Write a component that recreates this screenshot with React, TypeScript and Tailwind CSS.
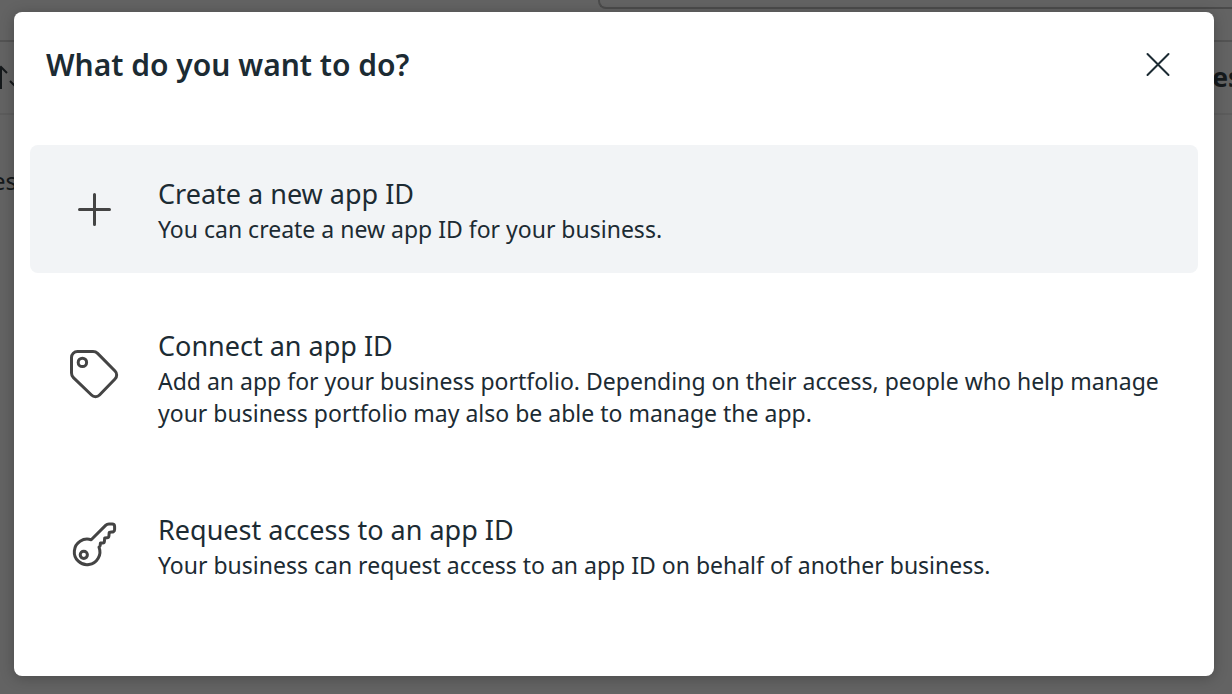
import type { ReactNode } from "react";

const iconProps = {
  fill: "none",
  stroke: "currentColor",
  strokeWidth: 3,
  strokeLinecap: "round" as const,
  strokeLinejoin: "round" as const,
  "aria-hidden": true,
};

function PlusIcon() {
  return (
    <svg width="64" height="64" viewBox="0 0 64 64" {...iconProps}>
      <path d="M32.5 17.5v30M17.5 32.5h30" />
    </svg>
  );
}

function TagIcon() {
  return (
    <svg width="64" height="64" viewBox="0 3 64 64" {...iconProps}>
      <path d="M15.5 9.5H31a6.5 6.5 0 0 1 4.6 1.9L53 29a5.6 5.6 0 0 1 0 8L37.5 53a5.6 5.6 0 0 1-8 0L11.4 35.6A6.5 6.5 0 0 1 9.5 31V15.5a6 6 0 0 1 6-6z" />
      <circle cx="20.4" cy="20.4" r="4.2" />
    </svg>
  );
}

function KeyIcon() {
  return (
    <svg width="64" height="64" viewBox="0 0 64 64" {...iconProps}>
      <path d="M29.2 26.8L43.6 12.4q1.4-1.4 3.4-1.4h3.2q2.4 0 2.4 2.4v3q0 1.4-1 2.1-.9.7-2.2.6l-2.2.4-.3 3.6q-.2 1.6-1.8 1.6l-2.4.2-.3 3.4q-.1 1.5-1.6 1.6l-2.4.2-.2 2.2q-.1 1-1.2 1.9A12.8 12.8 0 1 1 29.2 26.8z" />
      <circle cx="21.8" cy="41.8" r="3.6" />
    </svg>
  );
}

type Option = {
  title: string;
  desc: string;
  icon: ReactNode;
  active?: boolean;
};

const options: Option[] = [
  {
    title: "Create a new app ID",
    desc: "You can create a new app ID for your business.",
    icon: <PlusIcon />,
    active: true,
  },
  {
    title: "Connect an app ID",
    desc: "Add an app for your business portfolio. Depending on their access, people who help manage your business portfolio may also be able to manage the app.",
    icon: <TagIcon />,
  },
  {
    title: "Request access to an app ID",
    desc: "Your business can request access to an app ID on behalf of another business.",
    icon: <KeyIcon />,
  },
];

// The page underneath, dimmed by the dialog's backdrop.
function PageBehind() {
  return (
    <div className="absolute inset-0 overflow-hidden bg-[#636363] text-[#15191b]" aria-hidden="true">
      <div className="flex h-[42px] justify-end border-b-2 border-[#535353]">
        <div className="h-[9px] w-[calc(50%+18px)] rounded-bl-lg border-b-2 border-l-2 border-[#4b4b4b]" />
      </div>
      <div className="flex h-[73px] items-center justify-between border-b-2 border-[#5c5c5c]">
        <svg width="16" height="28" viewBox="0 0 16 28" fill="none" stroke="currentColor" strokeWidth="2">
          <path d="M1 25V3M-5 9l6-6 6 6M10 17l7 7" />
        </svg>
        <span className="w-5 text-[27px] font-bold">es</span>
      </div>
      <p className="-ml-2 pt-12 text-2xl leading-9">es</p>
    </div>
  );
}

export default function App() {
  return (
    <div className="relative min-h-screen pt-3 pr-[18px] pb-[18px] pl-[14px] font-['Noto_Sans',sans-serif] text-[#1c2b33]">
      <PageBehind />
      <div
        role="dialog"
        aria-modal="true"
        aria-labelledby="dialog-title"
        className="relative rounded-lg bg-white px-4 pt-8 pb-[67px] shadow-[0_2px_14px_rgba(0,0,0,0.25)]"
      >
        <header className="flex items-center justify-between pr-6 pl-4">
          <h1 id="dialog-title" className="text-[30px] leading-[41px] font-semibold">
            What do you want to do?
          </h1>
          <button type="button" aria-label="Close" className="flex h-10 w-8 items-center justify-center">
            <svg width="32" height="32" viewBox="0 0 32 32" {...iconProps} strokeWidth={2}>
              <path d="M5.5 5l21 21M26.5 5l-21 21" />
            </svg>
          </button>
        </header>

        <div className="mt-[60px] flex flex-col gap-6">
          {options.map((o) => (
            <button
              key={o.title}
              type="button"
              className={`flex w-full items-center gap-8 rounded-lg px-8 py-7 text-left ${o.active ? "bg-[#f2f4f6]" : ""}`}
            >
              <span className="-my-4 shrink-0 text-[#444444]">{o.icon}</span>
              <span className="pt-0.5">
                <span className="block text-[27px] leading-[38px]">{o.title}</span>
                <span className="block text-[23px] leading-8">{o.desc}</span>
              </span>
            </button>
          ))}
        </div>
      </div>
    </div>
  );
}
